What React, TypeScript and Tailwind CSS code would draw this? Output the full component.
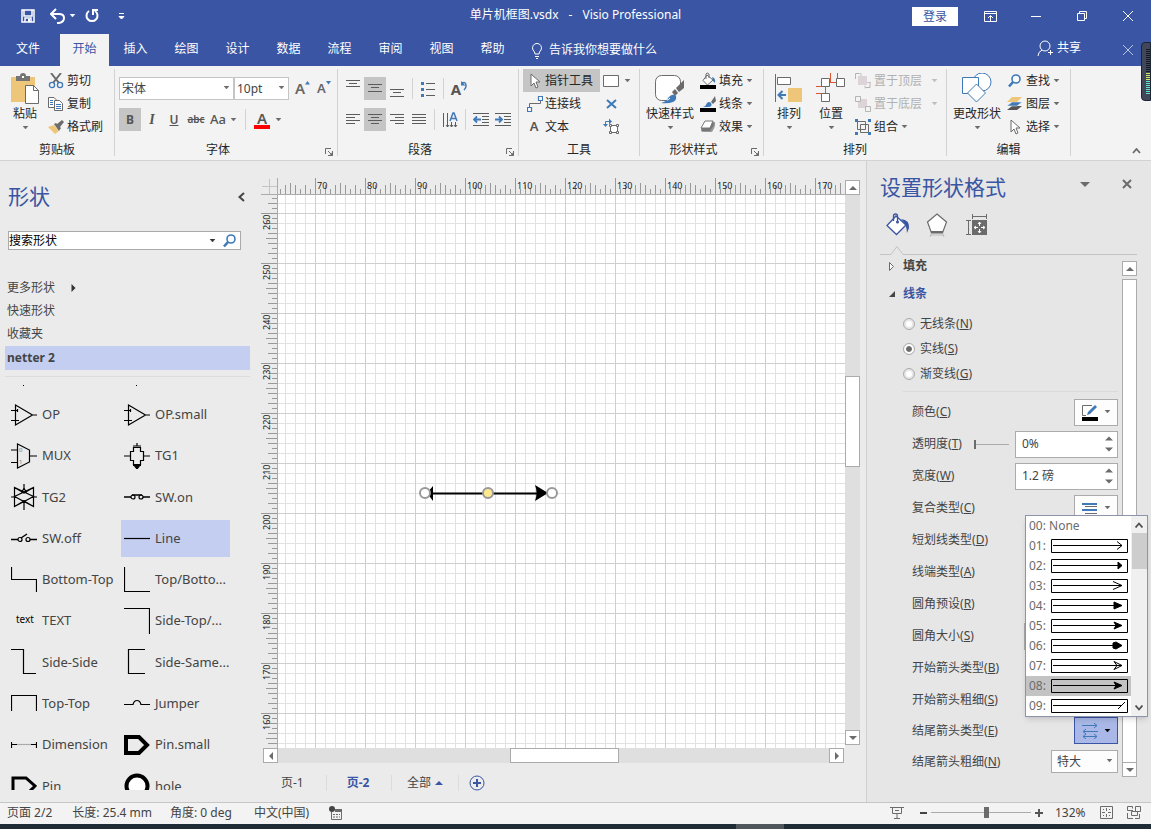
import type { ReactNode } from "react";

const GRAY = "#6b6b6b";
const BLUE = "#3f79b8";

function Svg({ w, h, children }: { w: number; h: number; children: ReactNode }) {
  return (
    <svg
      width={w}
      height={h}
      viewBox={`0 0 ${w} ${h}`}
      fill="none"
      className="shrink-0"
      aria-hidden="true"
    >
      {children}
    </svg>
  );
}

function Caret({ color = "#6b6b6b" }: { color?: string }) {
  return (
    <Svg w={7} h={4}>
      <path d="M1 0h5L3.5 3z" fill={color} stroke={color} strokeWidth=".5" />
    </Svg>
  );
}

/* ---------- ribbon building blocks ---------- */

function Launcher() {
  return (
    <button aria-label="更多选项" className="absolute right-1 bottom-0">
      <Svg w={8} h={8}>
        <path d="M.5 6V.5H6" stroke={GRAY} />
        <path d="M3 3l4 4M7.5 3v4.5H3" stroke={GRAY} />
        <path d="M7.5 4v4H4z" fill={GRAY} />
      </Svg>
    </button>
  );
}

function Group({
  label,
  width,
  launcher,
  children,
}: {
  label: string;
  width: string;
  launcher?: boolean;
  children: ReactNode;
}) {
  return (
    <section
      className={`relative flex h-[87px] shrink-0 flex-col border-r border-[#d2d2d2] ${width}`}
    >
      <div className="flex h-[69px] shrink-0">{children}</div>
      <h2 className={`pt-[5px] text-center leading-[14px] ${launcher ? "pr-4" : ""}`}>{label}</h2>
      {launcher && <Launcher />}
    </section>
  );
}

function BigButton({
  label,
  width,
  icon,
}: {
  label: string;
  width: string;
  icon: ReactNode;
}) {
  return (
    <button className={`flex shrink-0 flex-col items-center pt-1 ${width}`}>
      <span className="h-[33px]">{icon}</span>
      <span className="mb-1 leading-4 whitespace-nowrap">{label}</span>
      <Caret />
    </button>
  );
}

function SmallButton({
  label,
  icon,
  caret,
  disabled,
}: {
  label: string;
  icon: ReactNode;
  caret?: boolean;
  disabled?: boolean;
}) {
  return (
    <button
      disabled={disabled}
      className="flex h-[23px] items-center gap-[3px] whitespace-nowrap disabled:text-[#b1b1b1]"
    >
      {icon}
      <span>{label}</span>
      {caret && (
        <span className={disabled ? "pl-1.5" : ""}>
          <Caret color={disabled ? "#bdbdbd" : GRAY} />
        </span>
      )}
    </button>
  );
}

function ToolButton({
  label,
  active,
  children,
}: {
  label: string;
  active?: boolean;
  children: ReactNode;
}) {
  return (
    <button
      aria-label={label}
      className={`flex h-[23px] w-[22px] shrink-0 items-center justify-center ${active ? "bg-[#c5c5c5]" : ""}`}
    >
      {children}
    </button>
  );
}

function Sep() {
  return <span className="mx-1 h-[21px] w-px shrink-0 self-center bg-[#d2d2d2]" />;
}

/* every line is [x1, x2, y] */
function Lines({ rows }: { rows: number[][] }) {
  return (
    <Svg w={14} h={17}>
      {rows.map(([x1, x2, y]) => (
        <path key={y} d={`M${x1} ${y}.5H${x2}`} stroke="#5c5c5c" />
      ))}
    </Svg>
  );
}

const BucketIcon = () => (
  <Svg w={16} h={17}>
    <path d="M7 3l6 5-5.5 5L3 8.5z" fill="#fff" stroke={GRAY} />
    <path d="M6 7V2q1-2 3 0v4" stroke={GRAY} />
    <path d="M12 5q4 1 3 6l-2-2z" fill={BLUE} />
    <path d="M0 13h16v4H0z" fill="#000" />
  </Svg>
);

const BrushIcon = () => (
  <Svg w={16} h={17}>
    <path d="M15 1l1 5-3 3-2-2z" fill={GRAY} />
    <path d="M3 12q3-1 4-4 2-2 4 0 2 4-3 4z" fill={BLUE} />
    <path d="M0 13h16v4H0z" fill="#000" />
  </Svg>
);

const EffectIcon = () => (
  <Svg w={16} h={14}>
    <path d="M5 2h10q1 4-3 10H3q-2 0-2-2z" fill="#9a9a9a" />
    <path d="M5 1h8l-3 7H1z" fill="#fff" stroke="#777" strokeLinejoin="round" />
    <path d="M1 8l1 3h8l4-6-1-4-3 7H1" fill="#777" />
  </Svg>
);

const CursorIcon = () => (
  <Svg w={16} h={16}>
    <path d="M4 1v12l3-3 2 5 2-1-2-5h4z" fill="#fff" stroke={GRAY} />
  </Svg>
);

const SearchIcon = () => (
  <Svg w={16} h={14}>
    <circle cx="9" cy="5" r="4" fill="#f8fbff" stroke={BLUE} strokeWidth="1.6" />
    <path d="M6 8l-4 4.5" stroke={BLUE} strokeWidth="2.6" />
  </Svg>
);

/* ---------- title bar and tabs ---------- */

const tabs = ["插入", "绘图", "设计", "数据", "流程", "审阅", "视图", "帮助"];

function TitleBar() {
  return (
    <div className="flex h-[34px] items-start text-white">
      <div className="flex h-8 flex-1 items-center">
        <button aria-label="保存" className="ml-5">
          <Svg w={16} h={16}>
            <path d="M2 2h12v12H2zM4 2v6h8V2M5 14v-4h6v4" stroke="#fff" strokeWidth="1.5" />
            <path d="M8 11h2v3H8z" fill="#fff" />
          </Svg>
        </button>
        <button aria-label="撤消" className="ml-3.5">
          <Svg w={15} h={16}>
            <path d="M2 6h7q5 0 5 4t-5 5H7" stroke="#fff" strokeWidth="2" />
            <path d="M6 1L1 6l5 5" stroke="#fff" strokeWidth="2" />
          </Svg>
        </button>
        <span className="ml-1">
          <Caret color="#fff" />
        </span>
        <button aria-label="恢复" className="ml-2">
          <Svg w={16} h={16}>
            <path d="M5 3a5.500 5.500 0 1 0 6 0" stroke="#fff" strokeWidth="2" />
            <path d="M9 7V2h5" stroke="#fff" strokeWidth="2" />
          </Svg>
        </button>
        <button aria-label="自定义快速访问工具栏" className="ml-[18px]">
          <Svg w={7} h={8}>
            <path d="M1 1.500h5M1 4.500h5L3.500 7z" fill="#fff" stroke="#fff" />
          </Svg>
        </button>
      </div>
      <h1 className="flex gap-2.5 leading-[30px]">
        <span>单片机框图.vsdx</span>
        <span>-</span>
        <span>Visio Professional</span>
      </h1>
      <div className="flex h-8 flex-1 items-center justify-end">
        <button className="mr-[9px] h-[19px] w-[46px] bg-white leading-[19px] text-[#3955a3]">
          登录
        </button>
        <button aria-label="功能区显示选项" className="flex w-[46px] justify-center">
          <Svg w={13} h={11}>
            <path d="M.5.5h12v10H.5zM.5 2.500h12M6.500 10V5M4 7l2.500-2.500L9 7" stroke="#fff" />
          </Svg>
        </button>
        <button aria-label="最小化" className="flex w-[46px] justify-center">
          <Svg w={10} h={11}>
            <path d="M0 5.500h10" stroke="#fff" />
          </Svg>
        </button>
        <button aria-label="还原" className="flex w-[46px] justify-center">
          <Svg w={10} h={10}>
            <path d="M.5 2.500h7v7h-7zM2.500 2.500v-2h7v7h-2" stroke="#fff" />
          </Svg>
        </button>
        <button aria-label="关闭" className="flex w-[46px] justify-center">
          <Svg w={10} h={10}>
            <path d="M0 0l10 10M10 0L0 10" stroke="#fff" />
          </Svg>
        </button>
      </div>
    </div>
  );
}

function TabBar() {
  return (
    <nav className="flex h-8 items-center text-white">
      <button className="mr-1 h-8 w-14 pb-0.5">文件</button>
      <div className="flex gap-0.5">
        <button className="h-8 w-[49px] bg-[#f3f3f3] pb-0.5 text-[#3955a3]">开始</button>
        {tabs.map((tab) => (
          <button key={tab} className="h-8 w-[49px] pb-0.5">
            {tab}
          </button>
        ))}
      </div>
      <button className="ml-3.5 flex items-center gap-1.5">
        <Svg w={12} h={17}>
          <path d="M4 12q0-2-2-4A4.500 4.500 0 1 1 10 8q-2 2-2 4zM4 14.500h4M5 16.500h2" stroke="#fff" />
        </Svg>
        告诉我你想要做什么
      </button>
      <button className="ml-auto flex items-center gap-1 pb-1">
        <Svg w={16} h={17}>
          <circle cx="8" cy="6" r="5" stroke="#fff" />
          <path d="M1 16q0-4 4-6M11 12.500h5M13.500 10v5" stroke="#fff" />
        </Svg>
        共享
      </button>
      <button aria-label="关闭文档" className="mr-[18px] ml-[42px]">
        <Svg w={10} h={10}>
          <path d="M0 0l10 10M10 0L0 10" stroke="#b9c4e0" />
        </Svg>
      </button>
    </nav>
  );
}

/* ---------- ribbon ---------- */

function ClipboardGroup() {
  return (
    <Group label="剪贴板" width="w-[115px]">
      <BigButton
        label="粘贴"
        width="ml-[5px] w-10"
        icon={
          <Svg w={28} h={32}>
            <path d="M0 4h24v25H0z" fill="#edc679" />
            <path d="M5 3h4q0-3 3-3t3 3h4v5H5z" fill="#747474" />
            <path d="M11 3h2v2h-2z" fill="#fff" />
            <path d="M14.500 12.500h8l5 5v13h-13z" fill="#fff" stroke="#6b6b6b" />
            <path d="M22.500 12.500v5h5" stroke="#6b6b6b" />
          </Svg>
        }
      />
      <div className="ml-[3px]">
        <SmallButton
          label="剪切"
          icon={
            <Svg w={16} h={16}>
              <path d="M3 0l8 10M13 0L5 10" stroke={GRAY} strokeWidth="2" />
              <circle cx="4" cy="12" r="2.600" stroke={BLUE} strokeWidth="1.300" />
              <circle cx="12" cy="12" r="2.600" stroke={BLUE} strokeWidth="1.300" />
            </Svg>
          }
        />
        <SmallButton
          label="复制"
          icon={
            <Svg w={16} h={14}>
              <path d="M.5.5H6l2 2v8H.5z" fill="#fff" stroke={GRAY} />
              <path d="M6.500 3.500h5l3 3v7h-8z" fill="#fff" stroke={GRAY} />
              <path d="M2 3.500h3M2 5.500h3M2 7.500h3M8 7.500h5M8 9.500h5M8 11.500h5" stroke={BLUE} />
            </Svg>
          }
        />
        <SmallButton
          label="格式刷"
          icon={
            <Svg w={16} h={14}>
              <path d="M0 7l6-2 5 6-4 3z" fill="#edc679" />
              <path d="M6 4l2-1 5 5-2 3zM9 4l5-4 2 2-4 5z" fill={GRAY} />
            </Svg>
          }
        />
      </div>
    </Group>
  );
}

function FontGroup() {
  return (
    <Group label="字体" width="w-[223px]" launcher>
      <div className="flex flex-col gap-2 pt-2 pl-1">
        <div className="flex">
          <span className="relative flex">
            <select
              aria-label="字体"
              defaultValue="宋体"
              className="h-[23px] w-[115px] appearance-none border border-[#c5c5c5] bg-white pl-0.5 text-[#444]"
            >
              <option>宋体</option>
            </select>
            <span className="pointer-events-none absolute top-[9px] right-1">
              <Caret />
            </span>
          </span>
          <span className="relative flex">
            <select
              aria-label="字号"
              defaultValue="10pt"
              className="h-[23px] w-[55px] appearance-none border border-[#c5c5c5] bg-white pl-0.5 text-[#444]"
            >
              <option>10pt</option>
            </select>
            <span className="pointer-events-none absolute top-[9px] right-1">
              <Caret />
            </span>
          </span>
          <button
            aria-label="增大字号"
            className="ml-1.5 flex w-[22px] text-[15px] leading-[23px] font-semibold text-[#666]"
          >
            A
            <span className="pt-1">
              <Svg w={5} h={4}>
                <path d="M0 3.500h5L2.500 0z" fill={BLUE} />
              </Svg>
            </span>
          </button>
          <button
            aria-label="减小字号"
            className="flex w-[22px] text-[13px] leading-[23px] font-semibold text-[#666]"
          >
            A
            <span className="pt-1">
              <Svg w={5} h={4}>
                <path d="M0 0h5L2.500 3.500z" fill={BLUE} />
              </Svg>
            </span>
          </button>
        </div>
        <div className="flex text-[#555]">
          <ToolButton label="加粗" active>
            <b>B</b>
          </ToolButton>
          <ToolButton label="倾斜">
            <span className="font-['Liberation_Serif',serif] text-sm font-bold italic">I</span>
          </ToolButton>
          <ToolButton label="下划线">
            <span className="font-semibold underline">U</span>
          </ToolButton>
          <ToolButton label="删除线">
            <span className="text-[10px] font-semibold line-through">abc</span>
          </ToolButton>
          <button
            aria-label="更改大小写"
            className="ml-[3px] flex w-[29px] items-center gap-1 text-[13px] font-medium"
          >
            Aa
            <Caret />
          </button>
          <span className="mr-2 ml-1.5 h-[21px] w-px self-center bg-[#d2d2d2]" />
          <button aria-label="字体颜色" className="flex h-[23px] items-center gap-[5px]">
            <span className="h-[19px] w-4 border-b-4 border-[#f00] text-center text-[15px] leading-4 font-semibold">
              A
            </span>
            <Caret />
          </button>
        </div>
      </div>
    </Group>
  );
}

function ParagraphGroup() {
  return (
    <Group label="段落" width="w-[181px]" launcher>
      <div className="flex flex-col gap-2 pt-2 pl-1">
        <div className="flex">
          <ToolButton label="顶端对齐">
            <Lines rows={[[0, 14, 0], [3, 11, 3], [0, 14, 6]]} />
          </ToolButton>
          <ToolButton label="中部对齐" active>
            <Lines rows={[[0, 14, 4], [3, 11, 7], [0, 14, 11]]} />
          </ToolButton>
          <ToolButton label="底端对齐">
            <Lines rows={[[0, 14, 9], [3, 11, 12], [0, 14, 16]]} />
          </ToolButton>
          <Sep />
          <ToolButton label="项目符号">
            <Svg w={14} h={16}>
              <path d="M0 1h3v3H0zM0 7h3v3H0zM0 13h3v3H0z" fill={BLUE} />
              <path d="M5 2.500h9M5 8.500h9M5 14.500h9" stroke="#5c5c5c" />
            </Svg>
          </ToolButton>
          <Sep />
          <ToolButton label="旋转文本">
            <span className="text-[15px] leading-6 font-bold text-[#555]">A</span>
            <span className="h-4">
              <Svg w={6} h={10}>
                <path d="M0 0v4.500h4.500z" fill={BLUE} />
                <path d="M1 2q4-2 4 3 0 2-2 4" stroke={BLUE} strokeWidth="1.500" />
              </Svg>
            </span>
          </ToolButton>
        </div>
        <div className="flex">
          <ToolButton label="左对齐">
            <Lines rows={[[0, 14, 3], [0, 9, 6], [0, 14, 9], [0, 9, 12]]} />
          </ToolButton>
          <ToolButton label="居中" active>
            <Lines rows={[[0, 14, 3], [3, 11, 6], [0, 14, 9], [3, 11, 12]]} />
          </ToolButton>
          <ToolButton label="右对齐">
            <Lines rows={[[0, 14, 3], [5, 14, 6], [0, 14, 9], [5, 14, 12]]} />
          </ToolButton>
          <ToolButton label="两端对齐">
            <Lines rows={[[0, 14, 3], [0, 14, 6], [0, 14, 9], [0, 14, 12]]} />
          </ToolButton>
          <Sep />
          <ToolButton label="文字方向">
            <Svg w={16} h={16}>
              <path d="M1.500 1v14M5.500 1v14M9.500 10v5M13.500 10v5" stroke="#5c5c5c" />
              <path d="M8 9l3-8h1l3 8M9 6.500h5" stroke={BLUE} strokeWidth="1.500" />
              <path d="M4 13l1.500 2L7 13M8 13l1.500 2 1.500-2M12 13l1.500 2 1.500-2" stroke="#5c5c5c" />
            </Svg>
          </ToolButton>
          <Sep />
          <ToolButton label="减少缩进量">
            <Svg w={16} h={13}>
              <path d="M0 .5h16M9 3.500h7M9 6.500h7M9 9.500h7M0 12.500h16" stroke="#5c5c5c" />
              <path d="M1 6.500h7M4 3.500l-3 3 3 3" stroke={BLUE} strokeWidth="1.800" />
            </Svg>
          </ToolButton>
          <ToolButton label="增加缩进量">
            <Svg w={16} h={13}>
              <path d="M0 .5h16M9 3.500h7M9 6.500h7M9 9.500h7M0 12.500h16" stroke="#5c5c5c" />
              <path d="M0 6.500h7M4 3.500l3 3-3 3" stroke={BLUE} strokeWidth="1.800" />
            </Svg>
          </ToolButton>
        </div>
      </div>
    </Group>
  );
}

function ToolsGroup() {
  return (
    <Group label="工具" width="w-[121px]">
      <div className="ml-1 w-[77px]">
        <button className="flex h-[23px] w-full items-center gap-0.5 bg-[#c5c5c5] pl-1">
          <CursorIcon />
          指针工具
        </button>
        <button className="flex h-[23px] w-full items-center gap-0.5 pl-1">
          <Svg w={16} h={16}>
            <path d="M2.500 11V7.500h11V5" stroke={GRAY} />
            <path d="M.5 11.500h4v4h-4zM11.500.5h4v4h-4z" fill="#fff" stroke={BLUE} strokeWidth="1.200" />
          </Svg>
          连接线
        </button>
        <button className="flex h-[23px] w-full items-center gap-0.5 pl-1">
          <span className="w-4 pr-0.5 text-center text-[13px] font-semibold text-[#555]">A</span>
          文本
        </button>
      </div>
      <div className="ml-[3px]">
        <button aria-label="矩形" className="flex h-[23px] items-center gap-[5px]">
          <Svg w={16} h={12}>
            <path d="M.5.5h15v11H.5z" fill="#fff" stroke={GRAY} />
          </Svg>
          <Caret />
        </button>
        <button aria-label="连接点" className="flex h-[23px] w-4 items-center justify-center">
          <Svg w={11} h={10}>
            <path d="M1 1l9 8M10 1L1 9" stroke={BLUE} strokeWidth="2" />
          </Svg>
        </button>
        <button aria-label="文本块" className="flex h-[23px] items-center">
          <Svg w={17} h={17}>
            <path d="M7.500 7.500h7v7h-7z" fill="#fff" stroke={GRAY} />
            <path
              d="M6.500 6.500h2v2h-2zM13.500 6.500h2v2h-2zM6.500 13.500h2v2h-2zM13.500 13.500h2v2h-2z"
              fill="#fff"
              stroke={GRAY}
            />
            <path d="M2.500 7V3.500H7" stroke={BLUE} />
            <path d="M6 .5v6l3-3zM0 6h5L2.500 9z" fill={BLUE} />
          </Svg>
        </button>
      </div>
    </Group>
  );
}

function StyleGroup() {
  return (
    <Group label="形状样式" width="w-[124px]" launcher>
      <BigButton
        label="快速样式"
        width="ml-1.5 w-12"
        icon={
          <Svg w={30} h={32}>
            <rect x=".5" y="2.500" width="25" height="25" rx="6" fill="#fff" stroke={GRAY} />
            <path d="M12 24l14-12h2v18H13z" fill="#f3f3f3" />
            <path d="M29 7v8l-5 4-3-4z" fill={GRAY} />
            <path d="M20 16l3 4-3 3-3-4z" fill={GRAY} />
            <path d="M6 30q5-1 8-6 4-4 7-1 1 4-3 6-5 2-12 1z" fill={BLUE} />
            <path d="M12 27q2 0 3-2" stroke="#fff" />
          </Svg>
        }
      />
      <div className="ml-1.5">
        <SmallButton label="填充" caret icon={<BucketIcon />} />
        <SmallButton label="线条" caret icon={<BrushIcon />} />
        <SmallButton label="效果" caret icon={<EffectIcon />} />
      </div>
    </Group>
  );
}

function ArrangeGroup() {
  return (
    <Group label="排列" width="w-[183px]">
      <BigButton
        label="排列"
        width="ml-1 w-[42px]"
        icon={
          <Svg w={28} h={32}>
            <path d="M.5 1v28" stroke={GRAY} />
            <path d="M2.500 4.500h13v7h-13z" fill="#fff" stroke={GRAY} />
            <path d="M13 15h14v14H13z" fill="#edc679" />
            <path d="M4 22h7M7.500 18l-4 4 4 4" stroke={BLUE} strokeWidth="2" />
          </Svg>
        }
      />
      <BigButton
        label="位置"
        width="w-[42px]"
        icon={
          <Svg w={30} h={32}>
            <path d="M14.500 0v9M21.500 0v5M14 9.500h6M0 13.500h6M9.500 14v6M0 20.500h6" stroke="#d8552f" />
            <path d="M5.500 5.500h8v8h-8zM20.500 5.500h8v8h-8zM5.500 20.500h8v8h-8z" fill="#fff" stroke={GRAY} />
          </Svg>
        }
      />
      <div className="ml-[3px]">
        <SmallButton
          label="置于顶层"
          caret
          disabled
          icon={
            <Svg w={16} h={16}>
              <path d="M3 3h9v9H3z" fill="#dcd4d8" />
              <path d="M5 .5H.5V6M10 14.500h5V10" stroke="#b5b5b5" />
              <path d="M4 .5h2v3M10 12.500v3M12 9.500h4" stroke="#c5c5c5" />
            </Svg>
          }
        />
        <SmallButton
          label="置于底层"
          caret
          disabled
          icon={
            <Svg w={16} h={16}>
              <path d="M3 3h9v9H3z" fill="#dcd4d8" />
              <path d="M.5.5h5v5h-5zM10.500 10.500h5v5h-5z" fill="#f3f3f3" stroke="#b5b5b5" />
            </Svg>
          }
        />
        <SmallButton
          label="组合"
          caret
          icon={
            <Svg w={16} h={16}>
              <path d="M2.500 2.500h8v8h-8zM5.500 5.500h8v8h-8z" stroke={GRAY} />
              <path d="M0 0h3v3H0zM13 0h3v3h-3zM0 13h3v3H0zM13 13h3v3h-3z" fill={BLUE} />
            </Svg>
          }
        />
      </div>
    </Group>
  );
}

function EditGroup() {
  return (
    <Group label="编辑" width="w-[124px]">
      <BigButton
        label="更改形状"
        width="ml-1.5 w-12"
        icon={
          <Svg w={30} h={32}>
            <circle cx="20" cy="9" r="9" fill="#fff" stroke={BLUE} />
            <path d="M.5 4.500h16v16H.5z" fill="#fff" stroke={BLUE} />
            <path d="M14.500 11l9 9-9 9-9-9z" fill="#fff" stroke={BLUE} />
          </Svg>
        }
      />
      <div className="ml-1.5">
        <SmallButton label="查找" caret icon={<SearchIcon />} />
        <SmallButton
          label="图层"
          caret
          icon={
            <Svg w={16} h={14}>
              <path d="M5 9h10l-5 4H0z" fill="#555" />
              <path d="M5 5h10l-5 4H0z" fill={BLUE} stroke="#f3f3f3" strokeWidth=".5" />
              <path d="M5 0h10l-5 5H0z" fill="#edc679" />
            </Svg>
          }
        />
        <SmallButton label="选择" caret icon={<CursorIcon />} />
      </div>
    </Group>
  );
}

/* ---------- shapes pane ---------- */

type Stencil = { name: string; art: ReactNode; selected?: boolean };

const opAmp = (
  <path d="M4.500 3v20l17-10zM0 8.500h7M0 18.500h4M21 13h5M5 18.500h3M6.500 7v3" />
);

const stencils: Stencil[] = [
  { name: "OP", art: opAmp },
  { name: "OP.small", art: opAmp },
  {
    name: "MUX",
    art: (
      <>
        <path d="M6.500 1v24l12-6V7zM0 7h6M0 19.500h6M19 13h7" />
        <text x="8" y="9" fontSize="6" fill="#777" stroke="none">0</text>
        <text x="8" y="21" fontSize="6" fill="#777" stroke="none">1</text>
      </>
    ),
  },
  {
    name: "TG1",
    art: (
      <>
        <path d="M0 13h6.500V8.500h3V4.500h7v4h3V13H26M6.500 13v4.500h3v4h7v-4h3V13M13 0v3M9 3h8M9 22.500h8" />
        <path d="M10 22h6l-3 4z" fill="#000" />
      </>
    ),
  },
  {
    name: "TG2",
    art: (
      <path d="M3.500 3.500v19l19-10zM22.500 3.500v19l-19-10zM3.500 3.500L13 9l9.500-5.500M3.500 22.500L13 17l9.500 5.500M0 13h3M23 13h3M13 0v6M13 18v8M11 8l2-4 2 4z" />
    ),
  },
  {
    name: "SW.on",
    art: (
      <>
        <path d="M0 13h7M19 13h7M8 11h10" strokeWidth="1.500" />
        <circle cx="9" cy="13" r="2" />
        <circle cx="17" cy="13" r="2" />
      </>
    ),
  },
  {
    name: "SW.off",
    art: (
      <>
        <path d="M0 13.500h7M19 13.500h7M10 12l6-4" strokeWidth="1.500" />
        <circle cx="9" cy="13.500" r="2" />
        <circle cx="17" cy="13.500" r="2" />
      </>
    ),
  },
  { name: "Line", art: <path d="M0 12.500h26" />, selected: true },
  { name: "Bottom-Top", art: <path d="M.5 0v12.500h25V25" /> },
  { name: "Top/Botto...", art: <path d="M.5 0v24.500H26" /> },
  {
    name: "TEXT",
    art: (
      <text x="5" y="15" fontSize="10" fill="#000" stroke="none">text</text>
    ),
  },
  { name: "Side-Top/...", art: <path d="M0 .5h25.500V26" /> },
  { name: "Side-Side", art: <path d="M0 .5h12.500v24H25" /> },
  { name: "Side-Same...", art: <path d="M21 .5H4.500v24H21" /> },
  { name: "Top-Top", art: <path d="M.5 20V4.500h25V20" /> },
  { name: "Jumper", art: <path d="M0 13.500h9q1-4 4-4t4 4h9" /> },
  {
    name: "Dimension",
    art: (
      <>
        <path d="M.5 10v6M25.500 10v6M1 12.500h5M20 12.500h5" />
        <path d="M6 12.500h14" stroke="#aaa" />
      </>
    ),
  },
  { name: "Pin.small", art: <path d="M2 5h13l8 8-8 8H2z" fill="#ebebeb" strokeWidth="4" /> },
  { name: "Pin", art: <path d="M2 5h13l9 8-9 9H2z" fill="#ebebeb" strokeWidth="3" /> },
  { name: "hole", art: <circle cx="13" cy="13" r="10.500" fill="#fff" strokeWidth="4" /> },
];

function ShapesPane() {
  return (
    <aside className="flex w-[261px] shrink-0 flex-col pb-3 text-[13px] text-[#444]">
      <div className="flex items-center justify-between pt-5 pr-4 pl-2">
        <h2 className="pb-0.5 text-[21px] leading-[30px] text-[#3955a3]">形状</h2>
        <button aria-label="折叠">
          <Svg w={7} h={10}>
            <path d="M6 1L1.500 5 6 9" stroke="#444" strokeWidth="2" />
          </Svg>
        </button>
      </div>
      <form className="mt-[18px] mr-5 ml-2 flex h-[19px] items-center border border-[#aaa] bg-white">
        <input
          aria-label="搜索形状"
          defaultValue="搜索形状"
          className="w-0 flex-1 bg-transparent text-xs text-black outline-none"
        />
        <Caret color="#333" />
        <button type="button" aria-label="搜索" className="mr-0.5 ml-1.5">
          <SearchIcon />
        </button>
      </form>
      <ul className="mt-[26px] text-xs">
        <li className="flex h-6 items-center gap-4 pl-[7px]">
          更多形状
          <Svg w={5} h={8}>
            <path d="M.5 0v8l4-4z" fill="#333" />
          </Svg>
        </li>
        <li className="flex h-[22px] items-center pl-[7px]">快速形状</li>
        <li className="flex h-6 items-center pl-[7px]">收藏夹</li>
      </ul>
      <div className="mr-[11px] ml-[5px] flex h-6 items-center bg-[#c3cef1] pl-0.5 text-xs font-bold">
        netter 2
      </div>
      <div className="mt-1.5 mr-[11px] ml-[5px] border-t border-[#dcdcdc]" />
      <div className="min-h-0 flex-1 overflow-hidden pl-2">
        <div className="flex h-[17px] items-center gap-28 pl-[15px]">
          <span className="size-px bg-black" />
          <span className="size-px bg-black" />
        </div>
        <ul className="grid h-[413px] w-[226px] grid-cols-2 grid-rows-10">
          {stencils.map((item) => (
            <li
              key={item.name}
              className={`my-0.5 flex items-center gap-[5px] pl-[3px] whitespace-nowrap ${item.selected ? "mr-1 bg-[#c3cef1]" : ""}`}
            >
              <Svg w={26} h={26}>
                <g stroke="#000" strokeWidth="1.200">
                  {item.art}
                </g>
              </Svg>
              {item.name}
            </li>
          ))}
        </ul>
      </div>
    </aside>
  );
}

/* ---------- drawing area ---------- */

const tens = [...Array(11).keys()];
const tickPath =
  "M.5 0v17M5.500 11v6M10.500 7v10M15.500 11v6M20.500 7v10M25.500 5v12M30.500 7v10M35.500 11v6M40.500 7v10M45.500 11v6";

function ScrollButton({ label, d }: { label: string; d: string }) {
  return (
    <button
      aria-label={label}
      className="flex size-[15px] shrink-0 items-center justify-center border border-[#ababab] bg-white"
    >
      <Svg w={8} h={8}>
        <path d={d} fill={GRAY} />
      </Svg>
    </button>
  );
}

const UP = "M0 6h8L4 2z";
const DOWN = "M0 2h8L4 6z";
const LEFT = "M6 0v8L2 4z";
const RIGHT = "M2 0v8l4-4z";

function DrawingArea() {
  return (
    <main className="flex min-w-0 flex-1 flex-col pt-[17px]">
      <div className="mr-[5px] grid min-h-0 flex-1 grid-cols-[17px_1fr_16px] grid-rows-[17px_1fr_16px]">
        <div className="border-r border-b border-[#ababab]">
          <Svg w={16} h={16}>
            <path d="M1 8.500h15M8.500 1v15" stroke="#c5c5c5" />
          </Svg>
        </div>
        <svg className="h-[17px] w-full" aria-hidden="true">
          <defs>
            <pattern id="hticks" x="37" width="50" height="17" patternUnits="userSpaceOnUse">
              <path d={tickPath} stroke="#999" />
            </pattern>
          </defs>
          <rect width="100%" height="17" fill="url(#hticks)" />
          <path d="M0 16.500h2000" stroke="#ababab" />
          {tens.map((i) => (
            <text key={i} x={39 + i * 50} y="11" fontSize="9" fill="#222">
              {70 + i * 10}
            </text>
          ))}
        </svg>
        <div className="row-span-2 flex flex-col pt-0.5 pb-[3px]">
          <ScrollButton label="向上滚动" d={UP} />
          <div className="mr-px flex flex-1 flex-col bg-[#dfdfdf]">
            <span className="grow-[182]" />
            <span className="w-[15px] grow-[89] border border-[#ababab] bg-white" />
            <span className="grow-[264]" />
          </div>
          <ScrollButton label="向下滚动" d={DOWN} />
        </div>
        <svg className="h-full w-[17px]" aria-hidden="true">
          <defs>
            <pattern id="vticks" y="18" width="17" height="50" patternUnits="userSpaceOnUse">
              <path d={tickPath} stroke="#999" transform="matrix(0 1 1 0 0 0)" />
            </pattern>
          </defs>
          <rect width="17" height="100%" fill="url(#vticks)" />
          <path d="M16.500 0v2000" stroke="#ababab" />
          {tens.map((i) => (
            <text
              key={i}
              transform={`translate(9 ${35 + i * 50}) rotate(-90)`}
              fontSize="9"
              fill="#222"
            >
              {260 - i * 10}
            </text>
          ))}
        </svg>
        <svg className="h-full w-full bg-white" role="img" aria-label="绘图页">
          <defs>
            <pattern id="minor" x="7" y="8" width="10" height="10" patternUnits="userSpaceOnUse">
              <path d="M.5 0v10M0 .5h10" stroke="#e2e2e2" />
            </pattern>
            <pattern id="major" x="37" y="18" width="50" height="50" patternUnits="userSpaceOnUse">
              <path d="M.5 0v50M0 .5h50" stroke="#cfcfcf" />
            </pattern>
          </defs>
          <rect width="100%" height="100%" fill="url(#minor)" />
          <rect width="100%" height="100%" fill="url(#major)" />
          <path d="M150 298.500h112" stroke="#000" strokeWidth="2" />
          <path d="M257 290l13 8-13 8q3-8 0-16zM155 291v15l-6-8z" fill="#000" />
          <g fill="#fff" stroke="#999" strokeWidth="2">
            <circle cx="147" cy="298" r="5" />
            <circle cx="210" cy="298" r="5" fill="#ffe98f" />
            <circle cx="274" cy="298" r="5" />
          </g>
        </svg>
        <div className="col-span-2 flex pr-px pl-0.5">
          <ScrollButton label="向左滚动" d={LEFT} />
          <div className="flex h-[15px] flex-1 bg-[#dfdfdf]">
            <span className="grow-[233]" />
            <span className="grow-[107] border border-[#ababab] bg-white" />
            <span className="grow-[211]" />
          </div>
          <ScrollButton label="向右滚动" d={RIGHT} />
        </div>
      </div>
      <nav className="flex h-[38px] items-center pl-5 text-[#444]">
        <button className="w-[45px] text-left">页-1</button>
        <span className="h-4 w-px bg-[#dcdcdc]" />
        <button className="w-16 pr-0.5 font-bold text-[#3955a3]">页-2</button>
        <span className="h-4 w-px bg-[#dcdcdc]" />
        <button className="flex w-[66px] items-center justify-center gap-1">
          全部
          <Svg w={8} h={4}>
            <path d="M0 4h8L4 0z" fill="#3955a3" />
          </Svg>
        </button>
        <span className="h-4 w-px bg-[#dcdcdc]" />
        <button aria-label="插入页" className="ml-2.5">
          <Svg w={16} h={16}>
            <circle cx="8" cy="8" r="7" stroke="#3955a3" />
            <path d="M8 4v8M4 8h8" stroke="#3955a3" strokeWidth="2" />
          </Svg>
        </button>
      </nav>
    </main>
  );
}

/* ---------- format pane ---------- */

function Mnemonic({ text, letter }: { text: string; letter: string }) {
  return (
    <span className="whitespace-nowrap">
      {text}(<span className="underline">{letter}</span>)
    </span>
  );
}

function Field({
  id,
  text,
  letter,
  short,
  children,
}: {
  id?: string;
  text: string;
  letter: string;
  short?: boolean;
  children?: ReactNode;
}) {
  return (
    <div className={`flex items-center justify-between ${short ? "h-[31px]" : "h-8"}`}>
      <label htmlFor={id}>
        <Mnemonic text={text} letter={letter} />
      </label>
      {children}
    </div>
  );
}

function Spin({ id, value, width }: { id: string; value: string; width: string }) {
  return (
    <span className={`flex h-[27px] items-center border border-[#ababab] bg-white pr-1 ${width}`}>
      <input id={id} defaultValue={value} className="w-0 flex-1 pl-1.5 outline-none" />
      <Svg w={8} h={16}>
        <path d="M0 4.500h8L4 .5zM0 11.500h8l-4 4z" fill={GRAY} />
      </Svg>
    </span>
  );
}

const arrows = [
  { code: "01", head: "M66 2.500l5 4-5 4" },
  { code: "02", head: "M67 3l4 3.500-4 3.500z", solid: true },
  { code: "03", head: "M62 2.500l9 4-9 4" },
  { code: "04", head: "M63 3l8 3.500-8 3.500z", solid: true },
  { code: "05", head: "M63 3l8 3.500-8 3.500 2-3.500z", solid: true },
  { code: "06", head: "M62 4l3-1 6 3.500-6 3.500-3-1z", solid: true },
  { code: "07", head: "M63 2.500l8 4-8 4 3-4z" },
  { code: "08", head: "M63 3l8 3.500-8 3.500 2-3.500z", solid: true },
  { code: "09", head: "M67 10l7-7" },
];

function ArrowList() {
  return (
    <div className="absolute right-[-30px] bottom-full z-10 flex w-[123px] border border-[#8b94a8] bg-white text-[#6b6b6b] shadow-md">
      <ul role="listbox" aria-label="结尾箭头类型" className="flex-1">
        <li role="option" aria-selected="false" className="h-5 pl-[3px] leading-5">
          00: None
        </li>
        {arrows.map((arrow) => (
          <li
            key={arrow.code}
            role="option"
            aria-selected={arrow.code === "08"}
            className="flex h-5 items-center justify-between pr-[3px] pl-[3px] aria-selected:bg-[#c3c3c3]"
          >
            {arrow.code}:
            <Svg w={77} h={14}>
              <path d="M.5.5h76v13H.5z" fill={arrow.code === "08" ? "none" : "#fff"} stroke="#000" />
              <path d="M2 6.500h69" stroke="#000" />
              <path d={arrow.head} stroke="#000" fill={arrow.solid ? "#000" : "none"} />
            </Svg>
          </li>
        ))}
      </ul>
      <div className="flex w-4 flex-col items-center bg-[#f0f0f0]">
        <button aria-label="上一项" className="flex h-[17px] items-center">
          <Svg w={8} h={6}>
            <path d="M.5 5.500L4 1.500l3.500 4" stroke="#505050" strokeWidth="1.800" />
          </Svg>
        </button>
        <span className="h-9 w-[15px] bg-[#cdcdcd]" />
        <button aria-label="下一项" className="mt-auto flex h-[17px] items-center">
          <Svg w={8} h={6}>
            <path d="M.5.5L4 4.500l3.500-4" stroke="#505050" strokeWidth="1.800" />
          </Svg>
        </button>
      </div>
    </div>
  );
}

const lineKinds = [
  { text: "无线条", letter: "N" },
  { text: "实线", letter: "S" },
  { text: "渐变线", letter: "G" },
];

function FormatPane() {
  return (
    <aside className="flex w-[285px] shrink-0 flex-col border-l border-[#cfcfcf] bg-[#e6e6e6] pr-3.5 pl-[13px] text-[#444]">
      <div className="flex items-center pt-2.5">
        <h2 className="flex-1 text-[21px] leading-8 text-[#3955a3]">设置形状格式</h2>
        <button aria-label="任务窗格选项" className="mb-1.5">
          <Svg w={10} h={5}>
            <path d="M0 0h10L5 5z" fill={GRAY} />
          </Svg>
        </button>
        <button aria-label="关闭窗格" className="mr-[5px] mb-1.5 ml-8">
          <Svg w={10} h={10}>
            <path d="M1 1l8 8M9 1L1 9" stroke={GRAY} strokeWidth="2" />
          </Svg>
        </button>
      </div>
      <div className="flex gap-4 pt-[9px] pl-1.5">
        <button aria-label="填充与线条">
          <Svg w={24} h={26}>
            <path d="M10 4l10 9-9.500 9.500L1 13.500z" fill="#fff" stroke="#3955a3" strokeWidth="1.300" />
            <path d="M7.500 9V4q0-2 2-2t2 2v6" stroke="#3955a3" strokeWidth="1.300" />
            <circle cx="11.500" cy="10" r="1.500" fill="#3955a3" />
            <path d="M15 7q9 1 8 9l-2 5q0-8-6-14" fill="#3955a3" />
          </Svg>
        </button>
        <button aria-label="效果">
          <Svg w={22} h={26}>
            <path d="M11 2l9.500 8-4 11h-11l-4-11z" fill="#fff" stroke={GRAY} strokeWidth="1.200" />
            <path d="M5 20h12" stroke={GRAY} strokeWidth="2" />
            <path d="M5 22l-1 3M17 22l1 3M5 23h12" stroke="#bbb" />
          </Svg>
        </button>
        <button aria-label="大小与属性">
          <Svg w={24} h={26}>
            <path d="M8.500 2v5M22.500 2v5M8 4.500h14M2 8.500h5M2 22.500h5M4.500 9v13" stroke={GRAY} />
            <path d="M8 8h15v15H8z" fill={GRAY} />
            <path d="M15.500 10v4M15.500 17v4M10 15.500h4M17 15.500h4" stroke="#fff" />
            <path d="M14 12l1.500-2 1.500 2M14 19l1.500 2 1.500-2M12 14l-2 1.500 2 1.500M19 14l2 1.500-2 1.500" stroke="#fff" />
          </Svg>
        </button>
      </div>
      <div className="flex items-end pt-2">
        <span className="w-2.5 border-b border-[#c3c3c3]" />
        <Svg w={14} h={9}>
          <path d="M0 8.500h1l6-8 6 8h1" stroke="#c3c3c3" fill="#e6e6e6" />
        </Svg>
        <span className="flex-1 border-b border-[#c3c3c3]" />
      </div>

      <div className="flex">
        <div className="w-[238px] pl-[9px]">
          <button className="flex h-[22px] items-center gap-2 font-bold">
            <Svg w={6} h={9}>
              <path d="M.5.5v8l4-4z" fill="#fff" stroke={GRAY} />
            </Svg>
            填充
          </button>
          <button className="mt-1 flex h-[26px] items-center gap-2 font-bold text-[#3955a3]">
            <Svg w={6} h={6}>
              <path d="M6 0v6H0z" fill="#444" />
            </Svg>
            线条
          </button>
          <div className="pt-1 pl-3.5">
            {lineKinds.map((kind) => (
              <label key={kind.letter} className="flex h-[25px] items-center gap-[5px]">
                <input
                  type="radio"
                  name="line-kind"
                  defaultChecked={kind.letter === "S"}
                  className="size-3 appearance-none rounded-full border border-[#ababab] bg-white bg-clip-content p-[2px] checked:bg-[#6b6b6b] checked:shadow-[inset_0_0_0_2px_#fff]"
                />
                <Mnemonic text={kind.text} letter={kind.letter} />
              </label>
            ))}
          </div>
          <div className="mt-[5px] ml-3.5 border-t border-[#dadada]" />
          <div className="pt-1 pl-[23px]">
            <Field id="color" text="颜色" letter="C">
              <button
                id="color"
                className="flex h-[27px] w-11 items-center justify-center gap-1.5 border border-[#ababab] bg-[#fdfdfd]"
              >
                <Svg w={17} h={17}>
                  <path d="M11 1.500H1.500v10H5" stroke={GRAY} />
                  <path d="M6 11l1-3 7-7 2 2-7 7z" fill={BLUE} />
                  <path d="M1 13h16v4H1z" fill="#000" />
                </Svg>
                <Caret />
              </button>
            </Field>
            <Field id="alpha" text="透明度" letter="T">
              <input
                type="range"
                defaultValue={0}
                aria-label="透明度"
                className="mr-1.5 ml-auto h-[9px] w-[35px] appearance-none bg-[linear-gradient(#ababab,#ababab)] bg-[length:100%_1px] bg-center bg-no-repeat [&::-webkit-slider-thumb]:h-[9px] [&::-webkit-slider-thumb]:w-[2px] [&::-webkit-slider-thumb]:appearance-none [&::-webkit-slider-thumb]:bg-[#6b6b6b]"
              />
              <Spin id="alpha" value="0%" width="w-[103px]" />
            </Field>
            <Field id="weight" text="宽度" letter="W">
              <Spin id="weight" value="1.2 磅" width="w-[103px]" />
            </Field>
            <Field id="compound" text="复合类型" letter="C">
              <button
                id="compound"
                className="flex h-[27px] w-11 items-center justify-center gap-1.5 border border-[#ababab] bg-[#fdfdfd]"
              >
                <Svg w={16} h={12}>
                  <path d="M0 2h15M0 8h15" stroke={BLUE} strokeWidth="2" />
                  <path d="M3 4.500h12M3 11.500h12" stroke={GRAY} />
                </Svg>
                <Caret />
              </button>
            </Field>
            <Field text="短划线类型" letter="D" />
            <Field text="线端类型" letter="A" />
            <Field text="圆角预设" letter="R" />
            <Field id="radius" text="圆角大小" letter="S">
              <Spin id="radius" value="" width="w-[94px]" />
            </Field>
            <Field text="开始箭头类型" letter="B" />
            <Field text="开始箭头粗细" letter="S" short />
            <Field id="end-arrow" text="结尾箭头类型" letter="E" short>
              <div className="relative">
                <button
                  id="end-arrow"
                  className="flex h-[27px] w-11 items-center justify-center gap-1.5 border border-[#3955a3] bg-[#a9b8e6]"
                >
                  <Svg w={16} h={16}>
                    <path
                      d="M0 2.500h15M12 0l3 2.500L12 5M1 8.500h15M4 6L1 8.500 4 11M1 13.500h14M4 11l-3 2.500L4 16M12 11l3 2.500-3 2.500"
                      stroke={BLUE}
                    />
                  </Svg>
                  <Caret color="#000" />
                </button>
                <ArrowList />
              </div>
            </Field>
            <Field id="end-size" text="结尾箭头粗细" letter="N" short>
              <span className="relative flex">
                <select
                  id="end-size"
                  defaultValue="特大"
                  className="h-[23px] w-[67px] appearance-none border border-[#ababab] bg-[#fdfdfd] pl-[5px]"
                >
                  <option>特大</option>
                </select>
                <span className="pointer-events-none absolute top-[9px] right-[5px]">
                  <Caret />
                </span>
              </span>
            </Field>
          </div>
        </div>
        <div className="mt-1.5 ml-1 flex w-[15px] flex-col">
          <ScrollButton label="向上滚动" d={UP} />
          <span className="mt-[3px] flex-1 border border-b-0 border-[#ababab] bg-white" />
          <ScrollButton label="向下滚动" d={DOWN} />
        </div>
      </div>
    </aside>
  );
}

/* ---------- status bar ---------- */

function StatusBar() {
  return (
    <footer className="flex h-[22px] shrink-0 items-center border-t border-[#c6c6c6] bg-[#f3f3f3] pr-2.5 pb-0.5 pl-[7px] text-[#444]">
      <span>页面 2/2</span>
      <span className="ml-5">长度: 25.4 mm</span>
      <span className="ml-[18px]">角度: 0 deg</span>
      <span className="ml-[22px]">中文(中国)</span>
      <button aria-label="宏" className="ml-5">
        <Svg w={14} h={14}>
          <path d="M2.500 6v7.500h10V3.500H6" stroke={GRAY} />
          <path d="M6 3h7v3H6z" fill={GRAY} />
          <circle cx="3" cy="3" r="3" fill="#444" />
          <path d="M4 8.500h7M4 11h7" stroke={GRAY} strokeDasharray="2 1" />
        </Svg>
      </button>
      <button aria-label="演示模式" className="mr-4 ml-auto">
        <Svg w={14} h={12}>
          <path d="M0 .5h14M2.500 1v5.500h9V1M7 7v4M4 11.500h6M5 3.500h4" stroke={GRAY} />
        </Svg>
      </button>
      <button aria-label="缩小">
        <Svg w={7} h={8}>
          <path d="M0 4h7" stroke="#444" strokeWidth="2" />
        </Svg>
      </button>
      <input
        type="range"
        aria-label="缩放"
        defaultValue={56}
        className="mx-1 h-[11px] w-[100px] appearance-none bg-[linear-gradient(#ababab,#ababab)] bg-[length:100%_1px] bg-center bg-no-repeat [&::-webkit-slider-thumb]:h-[11px] [&::-webkit-slider-thumb]:w-[5px] [&::-webkit-slider-thumb]:appearance-none [&::-webkit-slider-thumb]:bg-[#6b6b6b]"
      />
      <button aria-label="放大">
        <Svg w={8} h={8}>
          <path d="M0 4h8M4 0v8" stroke="#555" strokeWidth="2" />
        </Svg>
      </button>
      <span className="ml-3 w-[33px]">132%</span>
      <button aria-label="适应窗口" className="ml-3">
        <Svg w={13} h={13}>
          <path d="M.5.5h12v12H.5z" stroke={GRAY} />
          <path d="M6.500 2v3M6.500 8v3M2 6.500h3M8 6.500h3M3 3l1 1M10 3L9 4M3 10l1-1M10 10L9 9" stroke={GRAY} />
        </Svg>
      </button>
      <button aria-label="切换窗口" className="ml-3.5">
        <Svg w={14} h={13}>
          <path d="M6 4.500H.5v-4h5v2M8.500.5h5v5h-5zM4.500 5.500h6v4h-6zM.5 7v5.500H6M8 12.500h4.500V8" stroke={GRAY} />
        </Svg>
      </button>
    </footer>
  );
}

export default function App() {
  return (
    <div className="relative flex h-screen flex-col bg-[#ebebeb] font-['Noto_Sans','Noto_Sans_CJK_SC',sans-serif] text-xs text-[#262626]">
      <header className="shrink-0">
        <div className="bg-[#3955a3]">
          <TitleBar />
          <TabBar />
        </div>
        <div className="flex h-[95px] border-b border-[#d2d2d2] bg-[#f3f3f3] pt-[3px]">
          <ClipboardGroup />
          <FontGroup />
          <ParagraphGroup />
          <ToolsGroup />
          <StyleGroup />
          <ArrangeGroup />
          <EditGroup />
          <button aria-label="折叠功能区" className="mt-auto mr-2.5 mb-1.5 ml-auto">
            <Svg w={9} h={6}>
              <path d="M1 5l3.500-4L8 5" stroke={GRAY} strokeWidth="1.800" />
            </Svg>
          </button>
        </div>
      </header>

      <div className="flex min-h-0 flex-1">
        <ShapesPane />
        <DrawingArea />
        <FormatPane />
      </div>

      <StatusBar />
      <div className="flex h-[5px] shrink-0 justify-center bg-[#1f2c35]">
        <span className="ml-[368px] w-12 bg-[#50575c]" />
      </div>

      {/* level meter docked on the window edge */}
      <div className="absolute top-[42px] right-0 flex h-[59px] w-2.5 flex-col items-end gap-px overflow-hidden rounded-l border border-[#1d2433] bg-[#3f4759] pt-1.5">
        {[...Array(12).keys()].map((i) => (
          <span key={i} className="h-px w-1 shrink-0 bg-[#151a24]" />
        ))}
        {[...Array(4).keys()].map((i) => (
          <span key={i} className="h-px w-1 shrink-0 bg-[#cfe86a]" />
        ))}
        {[...Array(7).keys()].map((i) => (
          <span key={i} className="h-px w-1 shrink-0 bg-[#63e0c8]" />
        ))}
      </div>
    </div>
  );
}
